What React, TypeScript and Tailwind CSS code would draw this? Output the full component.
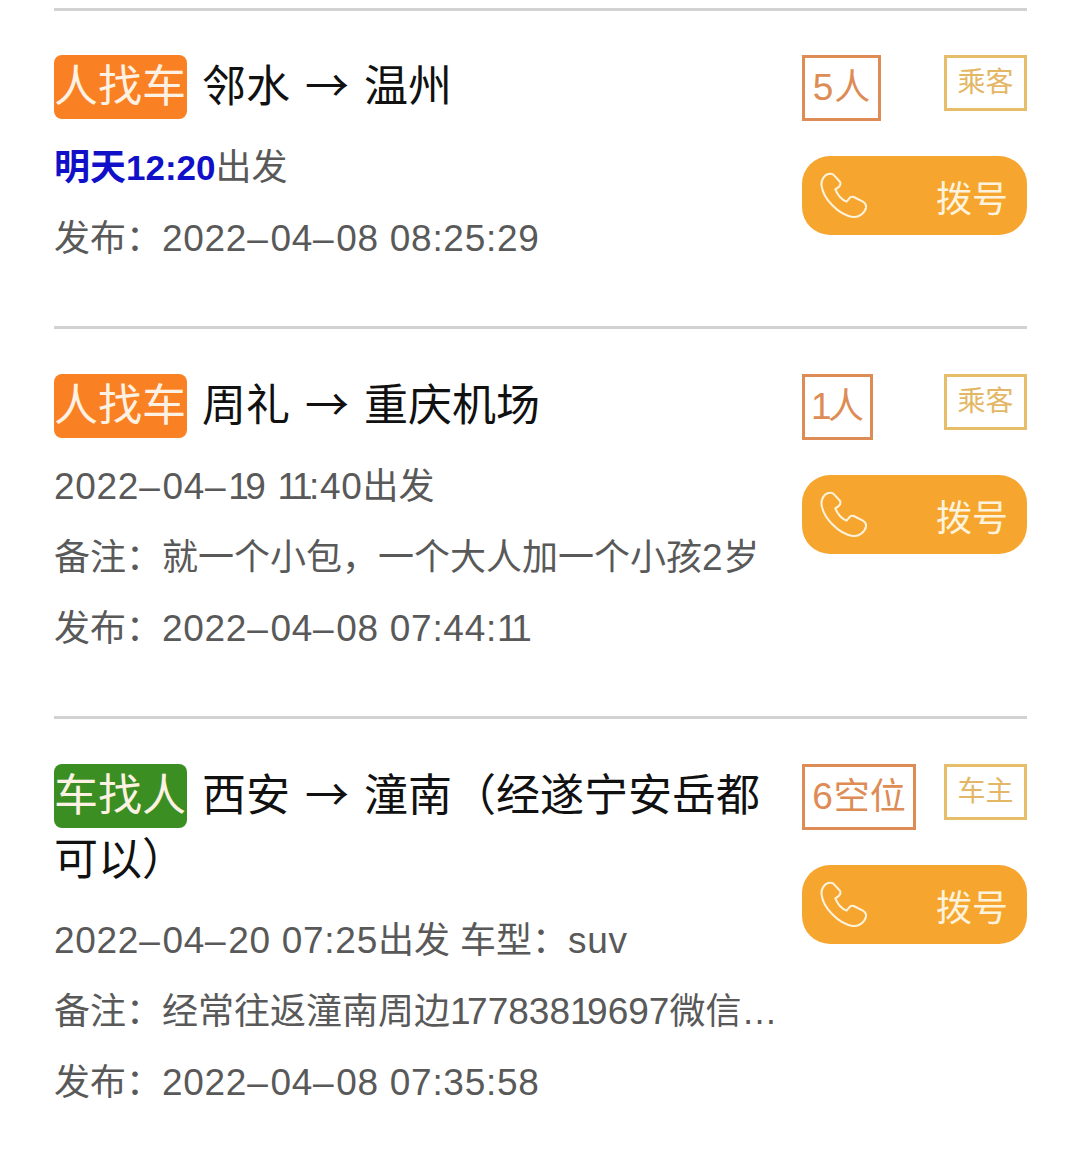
const font = { fontFamily: '"Liberation Sans", "Noto Sans CJK SC", sans-serif' }

// digits in the shot are a bit wider than Liberation, except the 1 which is narrow
function Num({ children, tight }: { children: string; tight?: boolean }) {
  return (
    <span className={tight ? "text-[37px]" : "text-[37px] tracking-[0.7px]"}>
      {children.split("").map((c, i) => {
        if (c === "1") return <span key={i} className="tracking-[-3.5px]">{c}</span>
        if (c === "–") return <span key={i} className="tracking-[2.7px]">{c}</span>
        return c
      })}
    </span>
  )
}

function PhoneIcon() {
  return (
    <svg width="47" height="47" viewBox="0 0 46 46" fill="none" stroke="currentColor" strokeWidth="2" strokeLinejoin="round">
      <path d="M8 2C4 3 1 8 1.500 13C3 26 18 42 32 44C38 45 44 40 45 35C45.500 32 44 30 42 29L33 24.500C31 24 29.500 24.500 28.500 26L26 29C21 27 17 22 15 17L18.500 14.500C20 13 20.500 11.500 19.500 9.500L14 3.500C12.500 1.500 10 1.500 8 2Z" />
    </svg>
  )
}

function Row({
  badge,
  badgeColor,
  title,
  seats,
  seatsWidth,
  role,
  pad,
  children,
}: {
  badge: string
  badgeColor: string
  title: React.ReactNode
  seats: React.ReactNode
  seatsWidth: string
  role: string
  pad: string
  children: React.ReactNode
}) {
  return (
    <div className={`border-t-[3px] border-[#d2d2d2] ${pad} flex justify-between`}>
      <div className="w-[721px]">
        <div className="text-[44px] leading-[64px] text-[#111]">
          <span className={`${badgeColor} inline-block w-[133px] h-[64px] align-top rounded-[8px] text-[#fdf1e3] mr-[15px]`}>{badge}</span>
          {title}
        </div>
        <div className="mt-[13px] text-[36px] leading-[71px] text-[#595959] whitespace-nowrap">{children}</div>
      </div>
      <div className="w-[225px]">
        <div className="flex justify-between items-start">
          <div className={`${seatsWidth} h-[66px] border-[3px] border-[#dd8c55] text-[#dd8c55] text-[36px] leading-[60px] text-center whitespace-nowrap`}>
            {seats}
          </div>
          <div className="w-[83px] h-[56px] border-[3px] border-[#e6bd68] text-[#e3b765] text-[28px] leading-[50px] text-center">
            {role}
          </div>
        </div>
        <div className="mt-[35px] h-[79px] rounded-[28px] bg-[#f6a62e] flex items-center justify-between pl-[18px] pr-[19px] text-[#fdf3dc] text-[36px]">
          <PhoneIcon />
          <span className="mt-[8px]">拨号</span>
        </div>
      </div>
    </div>
  )
}

function Arrow() {
  return <span className="mx-[15px] leading-none font-['Noto_Sans_CJK_SC']">→</span>
}

export default function App() {
  return (
    <div className="h-[1162px] overflow-hidden bg-white pt-[8px] pl-[54px] pr-[53px]" style={font}>
      <Row badge="人找车" badgeColor="bg-[#f98124]" seats={<><Num>5</Num>人</>} seatsWidth="w-[79px]" role="乘客" pad="pt-[44px] pb-[52px]"
        title={<>邻水<Arrow />温州</>}>
        <div>
          <span className="text-[#1010c8] font-bold">明天<span className="text-[35px]">12:20</span></span>出发
        </div>
        <div>发布：<Num>2022–04–08 08:25:29</Num></div>
      </Row>
      <Row badge="人找车" badgeColor="bg-[#f98124]" seats={<><Num>1</Num>人</>} seatsWidth="w-[71px]" role="乘客" pad="pt-[45px] pb-[52px]"
        title={<>周礼<Arrow />重庆机场</>}>
        <div><Num>2022–04–19 11:40</Num>出发</div>
        <div>备注：就一个小包，一个大人加一个小孩<Num>2</Num>岁</div>
        <div>发布：<Num>2022–04–08 07:44:11</Num></div>
      </Row>
      <Row badge="车找人" badgeColor="bg-[#3b8f22]" seats={<><Num>6</Num>空位</>} seatsWidth="w-[114px]" role="车主" pad="pt-[45px] pb-[51px]"
        title={<>西安<Arrow />潼南（经遂宁安岳都可以）</>}>
        <div><Num>2022–04–20 07:25</Num>出发 车型：<Num>suv</Num></div>
        <div>备注：经常往返潼南周边<Num tight>17783819697</Num>微信…</div>
        <div>发布：<Num>2022–04–08 07:35:58</Num></div>
      </Row>
    </div>
  )
}
